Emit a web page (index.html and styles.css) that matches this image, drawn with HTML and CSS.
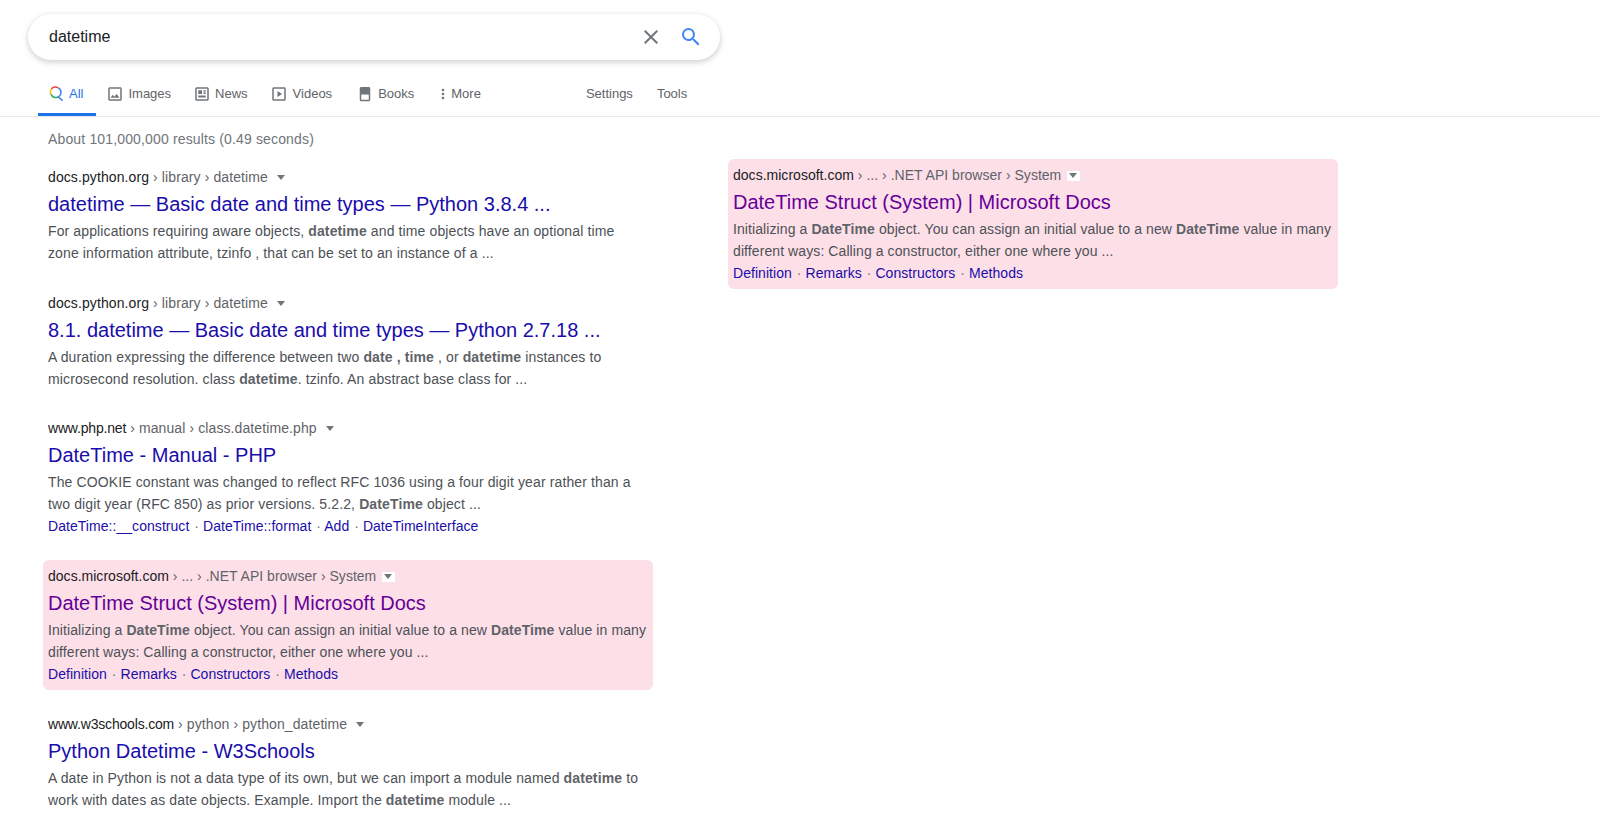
FILE: index.html
```html
<!DOCTYPE html>
<html lang="en">
<head>
    <meta charset="UTF-8">
    <meta name="viewport" content="width=device-width, initial-scale=1.0">
    <title>datetime - Search</title>
    <link rel="stylesheet" href="styles.css">
</head>
<body>
    <header class="top">
        <div class="search-box">
            <span class="search-text">datetime</span>
            <svg class="clear-icon" width="24" height="24" viewBox="0 0 24 24"><path fill="#70757a" d="M19 6.41L17.59 5 12 10.59 6.41 5 5 6.41 10.59 12 5 17.59 6.41 19 12 13.41 17.59 19 19 17.59 13.41 12z"/></svg>
            <svg class="go-icon" width="24" height="24" viewBox="0 0 24 24"><path fill="#4285f4" d="M15.5 14h-.79l-.28-.27A6.47 6.47 0 0 0 16 9.5 6.5 6.5 0 1 0 9.5 16c1.61 0 3.09-.59 4.23-1.57l.27.28v.79l5 4.99L20.49 19l-4.99-5zm-6 0C7.01 14 5 11.99 5 9.5S7.01 5 9.5 5 14 7.01 14 9.5 11.99 14 9.5 14z"/></svg>
        </div>
        <nav class="tabs">
            <a class="tab active">
                <svg width="16" height="16" viewBox="0 0 16 16" fill="none" stroke-width="1.5">
                    <path stroke="#ea4335" d="M2.4 3A5 5 0 0 1 9.4 2"/>
                    <path stroke="#fbbc05" d="M2.4 3A5 5 0 0 0 2 8.4"/>
                    <path stroke="#34a853" d="M2 8.4A5 5 0 0 0 9.3 10.8"/>
                    <path stroke="#4285f4" d="M9.4 2A5 5 0 0 1 9.3 10.8L13.6 14.6"/>
                </svg>
                All
            </a>
            <a class="tab">
                <svg width="18" height="18" viewBox="0 0 24 24"><path fill="#70757a" d="M19 5v14H5V5h14m0-2H5c-1.1 0-2 .9-2 2v14c0 1.1.9 2 2 2h14c1.1 0 2-.9 2-2V5c0-1.1-.9-2-2-2zm-4.86 8.86l-3 3.87L9 13.14 6 17h12l-3.86-5.14z"/></svg>
                Images
            </a>
            <a class="tab">
                <svg width="18" height="18" viewBox="0 0 24 24"><path fill="#70757a" d="M19 3H5c-1.1 0-2 .9-2 2v14c0 1.1.9 2 2 2h14c1.1 0 2-.9 2-2V5c0-1.1-.9-2-2-2zm0 16H5V5h14v14zM7 7h5v5H7V7zm7 0h3v2h-3V7zm0 3h3v2h-3v-2zM7 14h10v2.5H7V14z"/></svg>
                News
            </a>
            <a class="tab videos">
                <svg width="18" height="18" viewBox="0 0 24 24"><path fill="#70757a" d="M19 3H5c-1.1 0-2 .9-2 2v14c0 1.1.9 2 2 2h14c1.1 0 2-.9 2-2V5c0-1.1-.9-2-2-2zm0 16H5V5h14v14zM10 8l6 4-6 4V8z"/></svg>
                Videos
            </a>
            <a class="tab books">
                <svg width="18" height="18" viewBox="0 0 24 24"><path fill="#70757a" d="M17 2.5H7c-1.1 0-2 .9-2 2v15c0 1.1.9 2 2 2h10c1.1 0 2-.9 2-2v-15c0-1.1-.9-2-2-2zm0 17H7v-7h10v7z"/></svg>
                Books
            </a>
            <a class="tab more">
                <svg width="16" height="16" viewBox="0 0 24 24"><path fill="#70757a" d="M12 8c1.1 0 2-.9 2-2s-.9-2-2-2-2 .9-2 2 .9 2 2 2zm0 2c-1.1 0-2 .9-2 2s.9 2 2 2 2-.9 2-2-.9-2-2-2zm0 6c-1.1 0-2 .9-2 2s.9 2 2 2 2-.9 2-2-.9-2-2-2z"/></svg>
                More
            </a>
            <div class="tools">
                <a class="tool-link">Settings</a>
                <a class="tool-link">Tools</a>
            </div>
        </nav>
    </header>

    <main class="page">
        <section class="results">
            <p class="stats">About 101,000,000 results (0.49 seconds)</p>

            <article class="result first">
                <div class="cite"><span class="domain">docs.python.org</span> › library › datetime <span class="arrow"></span></div>
                <h3 class="title">datetime — Basic date and time types — Python 3.8.4 ...</h3>
                <p class="snippet">For applications requiring aware objects, <b>datetime</b> and time objects have an optional time zone information attribute, tzinfo , that can be set to an instance of a ...</p>
            </article>

            <article class="result">
                <div class="cite"><span class="domain">docs.python.org</span> › library › datetime <span class="arrow"></span></div>
                <h3 class="title">8.1. datetime — Basic date and time types — Python 2.7.18 ...</h3>
                <p class="snippet">A duration expressing the difference between two <b>date , time</b> , or <b>datetime</b> instances to microsecond resolution. class <b>datetime</b>. tzinfo. An abstract base class for ...</p>
            </article>

            <article class="result">
                <div class="cite"><span class="domain www">www.php.net</span> › manual › class.datetime.php <span class="arrow"></span></div>
                <h3 class="title">DateTime - Manual - PHP</h3>
                <p class="snippet">The COOKIE constant was changed to reflect RFC 1036 using a four digit year rather than a two digit year (RFC 850) as prior versions. 5.2.2, <b>DateTime</b> object ...</p>
                <div class="sitelinks"><a>DateTime::__construct</a> · <a>DateTime::format</a> · <a>Add</a> · <a>DateTimeInterface</a></div>
            </article>

            <article class="result marked">
                <div class="cite"><span class="domain">docs.microsoft.com</span> › ... › .NET API browser › System <span class="arrow"></span></div>
                <h3 class="title visited">DateTime Struct (System) | Microsoft Docs</h3>
                <p class="snippet">Initializing a <b>DateTime</b> object. You can assign an initial value to a new <b>DateTime</b> value in many different ways: Calling a constructor, either one where you ...</p>
                <div class="sitelinks"><a>Definition</a> · <a>Remarks</a> · <a>Constructors</a> · <a>Methods</a></div>
            </article>

            <article class="result">
                <div class="cite"><span class="domain www">www.w3schools.com</span> › python › python_datetime <span class="arrow"></span></div>
                <h3 class="title">Python Datetime - W3Schools</h3>
                <p class="snippet">A date in Python is not a data type of its own, but we can import a module named <b>datetime</b> to work with dates as date objects. Example. Import the <b>datetime</b> module ...</p>
            </article>
        </section>

        <aside class="side">
            <article class="result marked">
                <div class="cite"><span class="domain">docs.microsoft.com</span> › ... › .NET API browser › System <span class="arrow"></span></div>
                <h3 class="title visited">DateTime Struct (System) | Microsoft Docs</h3>
                <p class="snippet">Initializing a <b>DateTime</b> object. You can assign an initial value to a new <b>DateTime</b> value in many different ways: Calling a constructor, either one where you ...</p>
                <div class="sitelinks"><a>Definition</a> · <a>Remarks</a> · <a>Constructors</a> · <a>Methods</a></div>
            </article>
        </aside>
    </main>
</body>
</html>
```

FILE: styles.css
```css
body {
    font-family: "Liberation Sans", Arial, sans-serif;
    margin: 0;
    background-color: #fff;
    color: #4d5156;
}
p, h3 {
    margin: 0;
}
a {
    cursor: pointer;
}
.top {
    padding-top: 14px;
    border-bottom: 1px solid #ebebeb;
}
.search-box {
    display: flex;
    align-items: center;
    box-sizing: border-box;
    width: 692px;
    height: 46px;
    margin-left: 28px;
    padding: 0 17px 0 21px;
    border-radius: 23px;
    background-color: #fff;
    box-shadow: 0 2px 5px 1px rgba(64,60,67,0.2);
}
.search-text {
    flex: 1;
    font-size: 16px;
    color: #202124;
}
.go-icon {
    margin-left: 16px;
}
.tabs {
    display: flex;
    align-items: stretch;
    height: 42px;
    margin-top: 14px;
    margin-left: 38px;
    font-size: 13px;
    color: #5f6368;
}
.tab {
    display: flex;
    align-items: center;
    gap: 4px;
    padding: 0 12px 0 10px;
    border-bottom: 3px solid transparent;
}
.tab.active {
    padding: 0 13px 0 11px;
    color: #1a73e8;
    border-bottom-color: #1a73e8;
}
.tab.videos {
    gap: 5px;
    padding-right: 14px;
}
.tab.more {
    gap: 0;
    padding-left: 9px;
}
.tools {
    display: flex;
    align-items: center;
    gap: 24px;
    margin-left: 93px;
    padding-bottom: 3px;
}
.page {
    display: flex;
    align-items: flex-start;
}
.results {
    box-sizing: border-box;
    width: 733px;
    padding-left: 48px;
    padding-right: 85px;
}
.stats {
    margin-top: 13px;
    margin-bottom: 19px;
    font-size: 14px;
    line-height: 18px;
    letter-spacing: 0.15px;
    color: #70757a;
}
.side {
    width: 600px;
    margin-top: 47px;
}
.result {
    margin-bottom: 28px;
}
.result.first {
    margin-bottom: 29px;
}
.result.marked {
    margin-left: -5px;
    margin-right: -5px;
    margin-top: -5px;
    padding: 6px 5px 5px;
    border-radius: 6px;
    background-color: #fddfe8;
    margin-bottom: 24px;
}
.cite {
    font-size: 14px;
    line-height: 21px;
    letter-spacing: 0.1px;
    color: #5f6368;
}
.marked .cite {
    letter-spacing: 0.02px;
}
.domain {
    color: #202124;
}
.domain.www {
    letter-spacing: -0.18px;
}
.arrow {
    display: inline-block;
    position: relative;
    width: 13px;
    height: 10px;
    margin-left: 3px;
    vertical-align: -1px;
}
.arrow::after {
    content: "";
    position: absolute;
    left: 2px;
    top: 2px;
    border-top: 5px solid #70757a;
    border-left: 4.5px solid transparent;
    border-right: 4.5px solid transparent;
}
.marked .arrow {
    margin-left: 2px;
    background-color: #fff;
}
.title {
    margin-top: 3px;
    font-size: 20px;
    font-weight: normal;
    line-height: 26px;
    color: #1a0dab;
}
.title.visited {
    color: #609;
}
.snippet {
    font-size: 14px;
    line-height: 22px;
    letter-spacing: 0.12px;
    margin-top: 3px;
}
.marked .snippet {
    letter-spacing: 0.09px;
}
.snippet b {
    color: #5f6368;
}
.sitelinks {
    font-size: 14px;
    line-height: 22px;
    letter-spacing: 0.05px;
    color: #70757a;
}
.sitelinks a {
    color: #1a0dab;
    margin-right: 1px;
}
```
